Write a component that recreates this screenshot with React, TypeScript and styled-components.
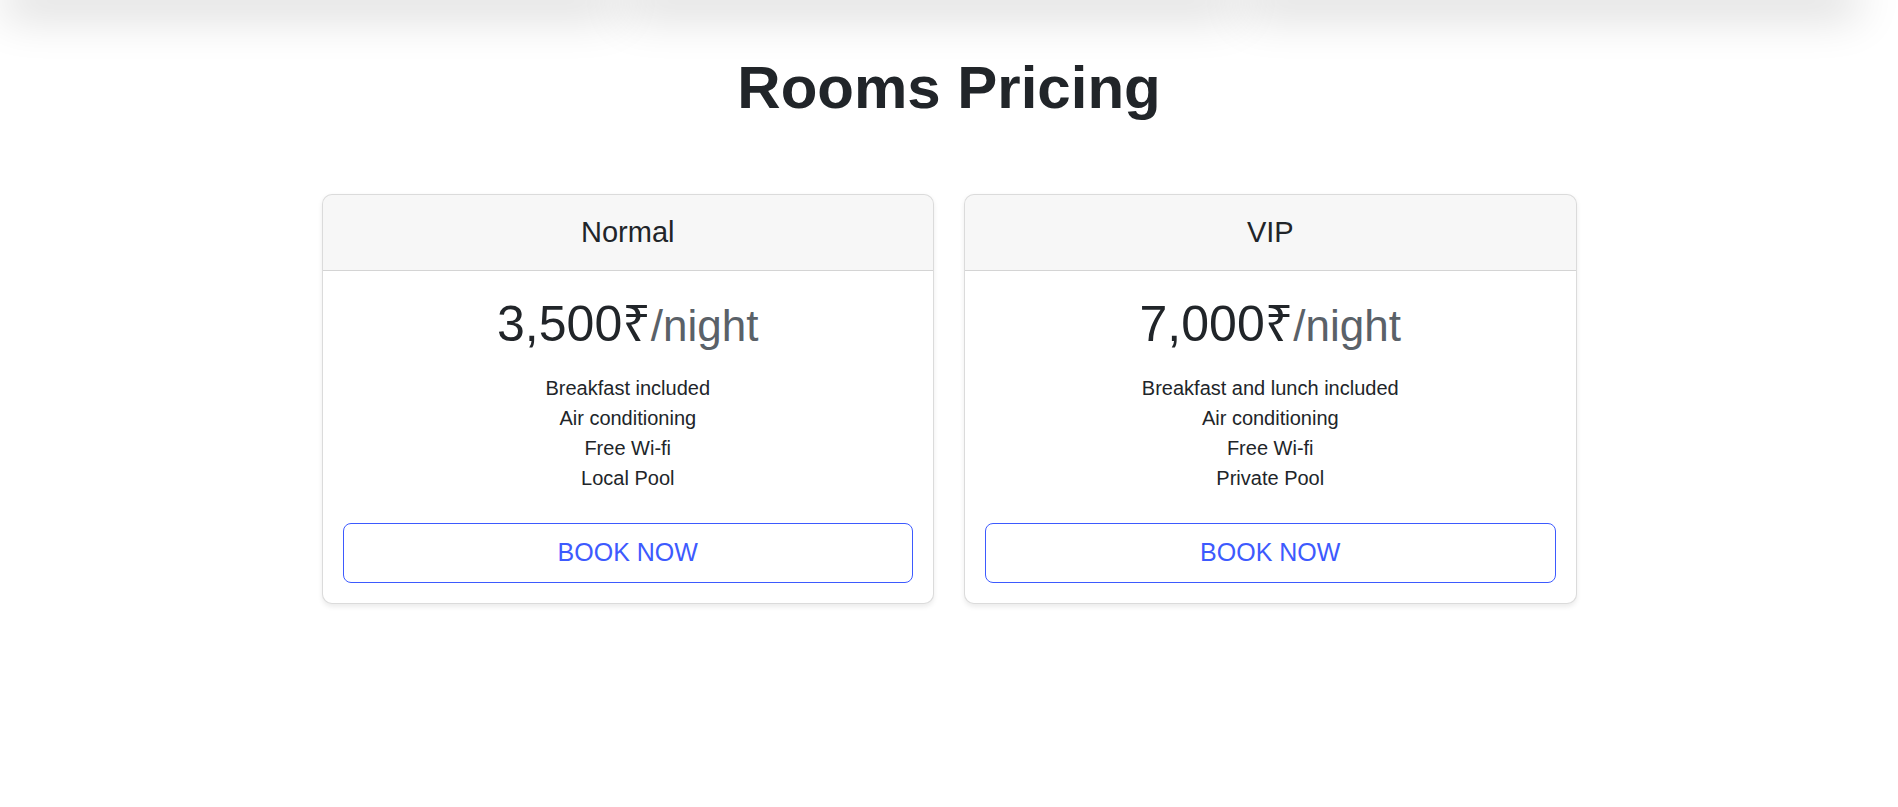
import React from "react";
import styled, { createGlobalStyle } from "styled-components";

const GlobalStyle = createGlobalStyle`
  html, body {
    margin: 0;
    padding: 0;
    background: #ffffff;
  }
  body {
    font-family: "Liberation Sans", Arial, "Noto Sans", sans-serif;
    color: #212529;
    overflow: hidden;
  }
  * { box-sizing: border-box; }
`;

const Page = styled.div`
  min-height: 807px;
  display: flex;
  flex-direction: column;
`;

const ShadowStrip = styled.div`
  display: flex;
  gap: 40px;
  padding: 0 56px 0 20px;
  height: 0;
`;

const ShadowItem = styled.div`
  flex: 1;
  height: 0;
  box-shadow: 0 0 46px 16px rgba(0, 0, 0, 0.16);
`;

const Title = styled.h1`
  margin: 52px 0 0;
  font-size: 60px;
  line-height: 72px;
  font-weight: 700;
  text-align: center;
  color: #212529;
`;

const CardRow = styled.div`
  display: flex;
  gap: 30px;
  width: 1255px;
  margin: 70px auto 0;
`;

const Card = styled.div`
  flex: 1;
  display: flex;
  flex-direction: column;
  border: 1px solid rgba(0, 0, 0, 0.14);
  border-radius: 10px;
  box-shadow: 0 2.5px 5px rgba(0, 0, 0, 0.08);
  overflow: hidden;
  text-align: center;
  background: #fff;
`;

const CardHeader = styled.div`
  padding: 20px;
  background: rgba(0, 0, 0, 0.03);
  border-bottom: 1px solid rgba(0, 0, 0, 0.14);
  font-size: 29px;
  line-height: 35px;
  font-weight: 400;
  color: #212529;
`;

const CardBody = styled.div`
  padding: 20px;
`;

const Price = styled.div`
  padding-top: 3px;
  font-size: 50px;
  line-height: 60px;
  font-weight: 400;
  color: #212529;
`;

const Per = styled.small`
  font-size: 44px;
  color: #5a6168;
`;

const Features = styled.ul`
  list-style: none;
  margin: 17px 0 30px;
  padding: 0;
  font-size: 20px;
  line-height: 30px;
  color: #212529;
`;

const BookButton = styled.button`
  display: block;
  width: 100%;
  padding: 10px 20px;
  font-family: inherit;
  font-size: 25px;
  line-height: 37.5px;
  color: #3d5afe;
  background: transparent;
  border: 1px solid #3d5afe;
  border-radius: 8px;
  text-transform: uppercase;
  cursor: pointer;
`;

type Plan = {
  name: string;
  price: string;
  features: string[];
};

const plans: Plan[] = [
  {
    name: "Normal",
    price: "3,500₹",
    features: ["Breakfast included", "Air conditioning", "Free Wi-fi", "Local Pool"],
  },
  {
    name: "VIP",
    price: "7,000₹",
    features: ["Breakfast and lunch included", "Air conditioning", "Free Wi-fi", "Private Pool"],
  },
];

export default function App() {
  return (
    <Page>
      <GlobalStyle />
      <ShadowStrip>
        <ShadowItem />
        <ShadowItem />
        <ShadowItem />
      </ShadowStrip>
      <Title>Rooms Pricing</Title>
      <CardRow>
        {plans.map((p) => (
          <Card key={p.name}>
            <CardHeader>{p.name}</CardHeader>
            <CardBody>
              <Price>
                {p.price}
                <Per>/night</Per>
              </Price>
              <Features>
                {p.features.map((f) => (
                  <li key={f}>{f}</li>
                ))}
              </Features>
              <BookButton>Book now</BookButton>
            </CardBody>
          </Card>
        ))}
      </CardRow>
    </Page>
  );
}
